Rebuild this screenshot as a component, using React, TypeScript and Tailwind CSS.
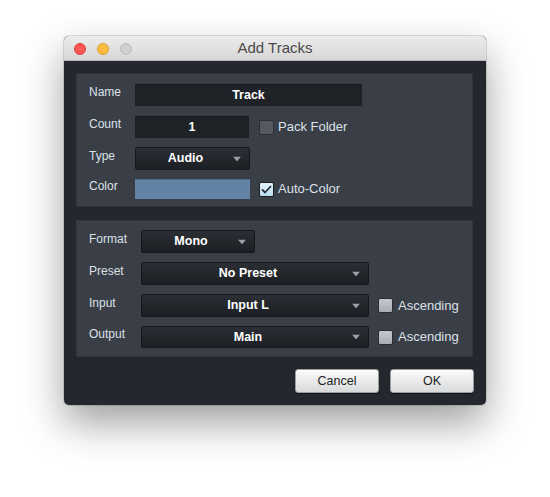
import React from "react";

function Arrow() {
  return (
    <svg width="8" height="5" viewBox="0 0 8 5" className="shrink-0">
      <path d="M0 0 H8 L4 5 Z" fill="#9aa0a8" />
    </svg>
  );
}

function TextField({ value, w }: { value: string; w: string }) {
  return (
    <div
      className={`${w} h-[22px] bg-[#1f2227] border-t border-[#17191d] flex items-center justify-center text-[12.5px] font-bold text-white`}
    >
      {value}
    </div>
  );
}

function Dropdown({ value, w, h = "h-[22px]" }: { value: string; w: string; h?: string }) {
  return (
    <div
      className={`${w} ${h} relative bg-gradient-to-b from-[#2b2f35] to-[#1c1f23] border border-[#15171a] rounded-[2px] flex items-center pr-[14px] text-[12.5px] font-bold text-white`}
    >
      <span className="flex-1 text-center">{value}</span>
      <span className="absolute right-[8px] top-1/2 -translate-y-1/2 flex">
        <Arrow />
      </span>
    </div>
  );
}

function Check({ tone, checked }: { tone: "dark" | "light" | "blue"; checked?: boolean }) {
  const cls =
    tone === "dark"
      ? "bg-[#555a62] border-[#2a2d32]"
      : tone === "light"
      ? "bg-gradient-to-b from-[#c4c7cc] to-[#a9adb3] border-[#2a2d32]"
      : "bg-gradient-to-b from-[#e4f2fb] to-[#b9dcf2] border-[#1d2024]";
  return (
    <div className={`w-[15px] h-[15px] rounded-[2px] border ${cls} flex items-center justify-center`}>
      {checked && (
        <svg width="11" height="9" viewBox="0 0 11 9">
          <path d="M1 4.5 L4 7.5 L10 1" fill="none" stroke="#2b3036" strokeWidth="1.8" />
        </svg>
      )}
    </div>
  );
}

function Label({ children, w }: { children: React.ReactNode; w: string }) {
  return <div className={`${w} shrink-0 text-[12px] text-[#dce1e7] leading-none -mt-[6px]`}>{children}</div>;
}

function Button({ children }: { children: React.ReactNode }) {
  return (
    <button className="w-[84px] h-[24px] rounded-[3px] bg-gradient-to-b from-[#fbfbfb] to-[#d8d9db] border border-[#9b9da1] text-[12.5px] text-[#222] shadow-[0_1px_1px_rgba(0,0,0,0.5)]">
      {children}
    </button>
  );
}

export default function App() {
  return (
    <div
      className="w-[550px] h-[497px] bg-white pt-[36px] pl-[64px]"
      style={{ fontFamily: '"Liberation Sans", Arial, sans-serif' }}
    >
      <div className="w-[422px] h-[369px] rounded-[5px] overflow-hidden bg-[#24272d] flex flex-col shadow-[0_18px_40px_rgba(0,0,0,0.38),0_0_0_1px_rgba(0,0,0,0.12)]">
        {/* Title bar */}
        <div className="h-[25px] shrink-0 relative bg-gradient-to-b from-[#ececec] to-[#d7d7d7] border-b border-[#b8b8b8] flex items-center justify-center">
          <div className="absolute left-[10px] top-[7px] flex gap-[11px]">
            <span className="w-[12px] h-[12px] rounded-full bg-[#fc5753] border border-[#df3e3a]" />
            <span className="w-[12px] h-[12px] rounded-full bg-[#fdbc40] border border-[#de9e2a]" />
            <span className="w-[12px] h-[12px] rounded-full bg-[#d0d0d0] border border-[#bcbcbc]" />
          </div>
          <span className="text-[15px] text-[#4a4a4a]">Add Tracks</span>
        </div>

        {/* Body */}
        <div className="flex-1 pt-[12px] pl-[12px] pr-[13px] flex flex-col">
          {/* Panel 1 */}
          <div className="h-[134px] bg-[#393e47] border border-[#30343b] pl-[12px] pt-[10px] flex flex-col gap-[9px]">
            <div className="flex items-center h-[22px]">
              <Label w="w-[46px]">Name</Label>
              <TextField value="Track" w="w-[227px]" />
            </div>
            <div className="flex items-center h-[22px] mt-[1px]">
              <Label w="w-[46px]">Count</Label>
              <TextField value="1" w="w-[114px]" />
              <div className="ml-[10px] flex items-center gap-[4px] text-[13px] text-[#dce1e7]">
                <Check tone="dark" />
                <span>Pack Folder</span>
              </div>
            </div>
            <div className="flex items-center h-[23px]">
              <Label w="w-[46px]">Type</Label>
              <Dropdown value="Audio" w="w-[115px]" h="h-[23px]" />
            </div>
            <div className="flex items-center h-[20px]">
              <Label w="w-[46px]">Color</Label>
              <div className="w-[115px] h-[20px] bg-[#6283a6] border-t border-[#4e6a88]" />
              <div className="ml-[9px] flex items-center gap-[4px] text-[13px] text-[#dce1e7]">
                <Check tone="blue" checked />
                <span>Auto-Color</span>
              </div>
            </div>
          </div>

          {/* Panel 2 */}
          <div className="mt-[13px] h-[137px] bg-[#393e47] border border-[#30343b] pl-[12px] pt-[9px] flex flex-col gap-[9px]">
            <div className="flex items-center h-[23px]">
              <Label w="w-[52px]">Format</Label>
              <Dropdown value="Mono" w="w-[114px]" h="h-[23px]" />
            </div>
            <div className="flex items-center h-[23px]">
              <Label w="w-[52px]">Preset</Label>
              <Dropdown value="No Preset" w="w-[228px]" h="h-[23px]" />
            </div>
            <div className="flex items-center h-[23px]">
              <Label w="w-[52px]">Input</Label>
              <Dropdown value="Input L" w="w-[228px]" h="h-[23px]" />
              <div className="ml-[9px] flex items-center gap-[5px] text-[13px] text-[#dce1e7]">
                <Check tone="light" />
                <span>Ascending</span>
              </div>
            </div>
            <div className="flex items-center h-[22px]">
              <Label w="w-[52px]">Output</Label>
              <Dropdown value="Main" w="w-[228px]" />
              <div className="ml-[9px] flex items-center gap-[5px] text-[13px] text-[#dce1e7]">
                <Check tone="light" />
                <span>Ascending</span>
              </div>
            </div>
          </div>

          {/* Buttons */}
          <div className="mt-[12px] flex justify-end gap-[11px] mr-[-1px]">
            <Button>Cancel</Button>
            <Button>OK</Button>
          </div>
        </div>
      </div>
    </div>
  );
}
